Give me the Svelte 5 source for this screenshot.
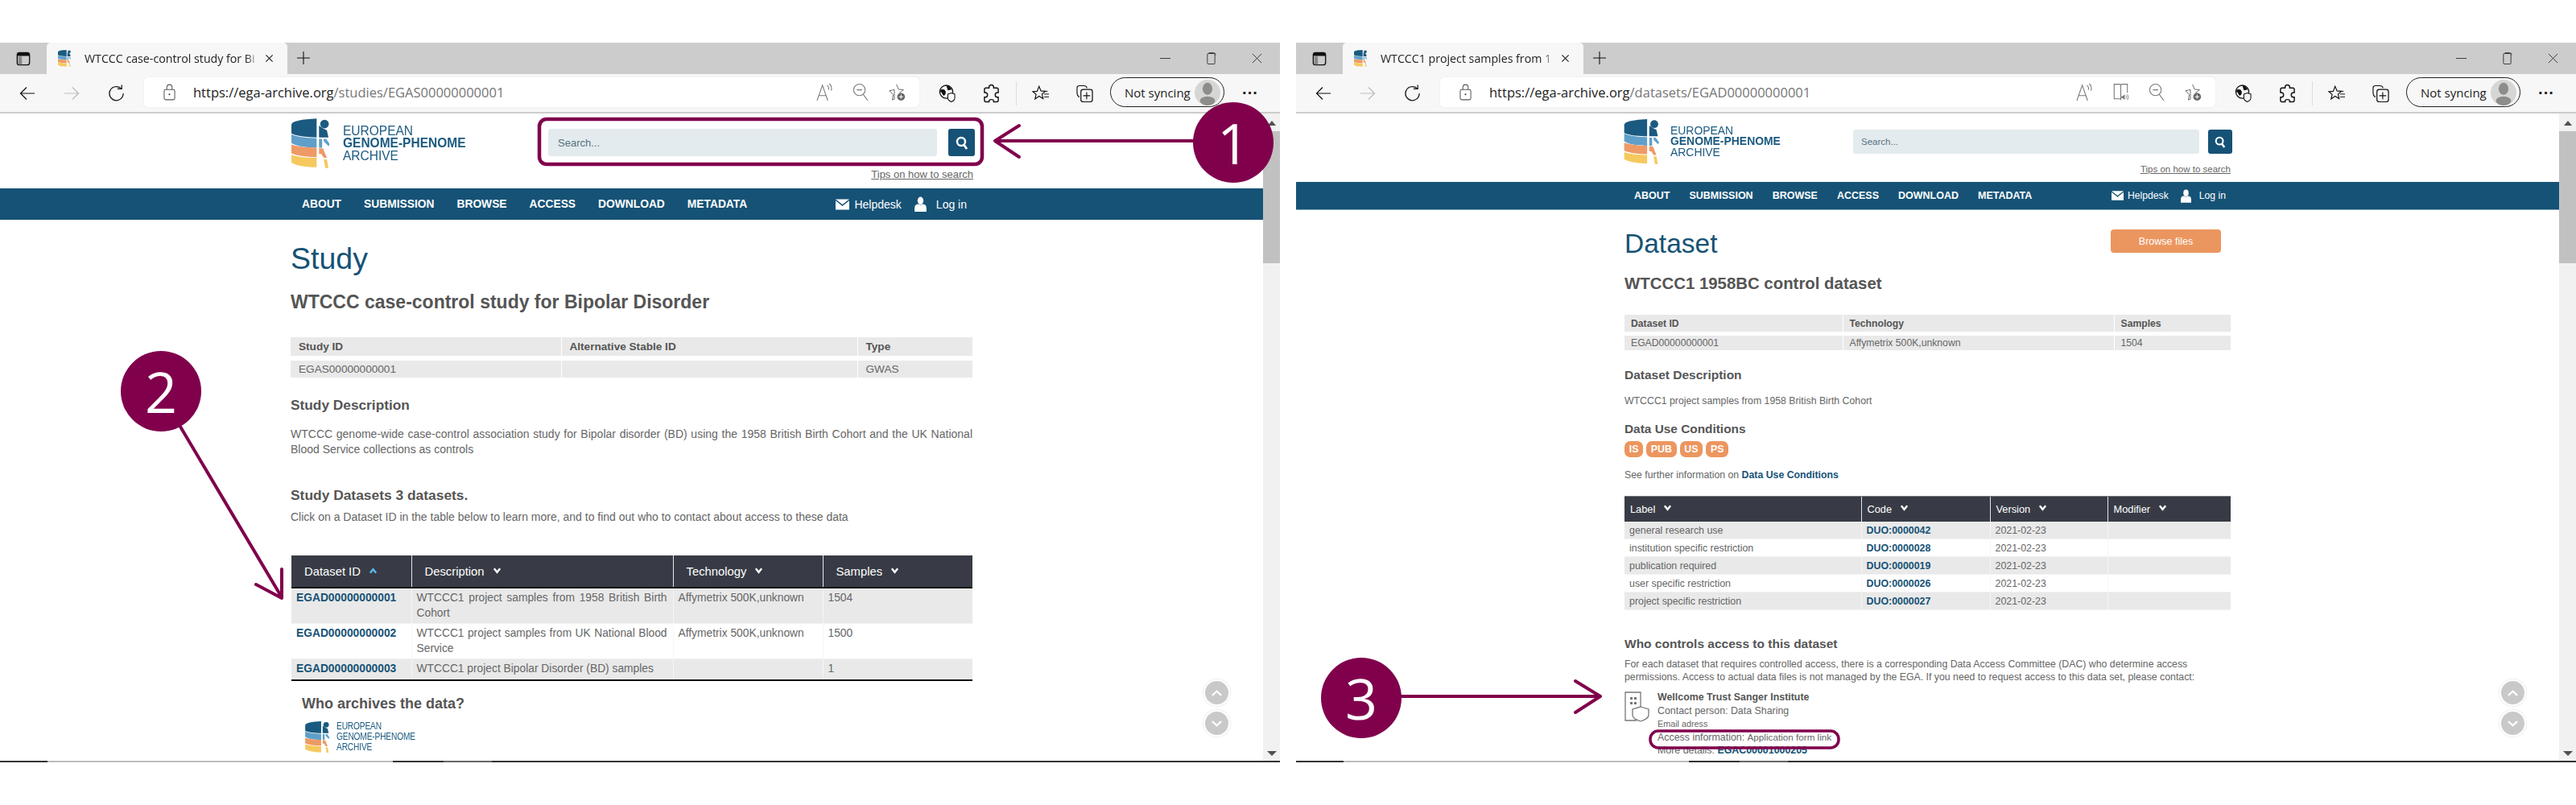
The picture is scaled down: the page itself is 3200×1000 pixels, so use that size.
<script lang="ts">
	const navItems = ['ABOUT', 'SUBMISSION', 'BROWSE', 'ACCESS', 'DOWNLOAD', 'METADATA'];

	const studyDatasets = [
		{ id: 'EGAD00000000001', desc: 'WTCCC1 project samples from 1958 British Birth Cohort', tech: 'Affymetrix 500K,unknown', samples: '1504' },
		{ id: 'EGAD00000000002', desc: 'WTCCC1 project samples from UK National Blood Service', tech: 'Affymetrix 500K,unknown', samples: '1500' },
		{ id: 'EGAD00000000003', desc: 'WTCCC1 project Bipolar Disorder (BD) samples', tech: '', samples: '1' }
	];

	const conditions = [
		{ label: 'general research use', code: 'DUO:0000042', version: '2021-02-23' },
		{ label: 'institution specific restriction', code: 'DUO:0000028', version: '2021-02-23' },
		{ label: 'publication required', code: 'DUO:0000019', version: '2021-02-23' },
		{ label: 'user specific restriction', code: 'DUO:0000026', version: '2021-02-23' },
		{ label: 'project specific restriction', code: 'DUO:0000027', version: '2021-02-23' }
	];

	const badges = ['IS', 'PUB', 'US', 'PS'];
</script>

{#snippet logoMark(cls)}
	<svg class={cls} viewBox="0 0 48 63" aria-hidden="true">
		<path fill="#1b5a80" d="M32 0C14 1 0 3 0 8v11c5 3 18 5 32 5z" />
		<path fill="#5f9fc9" d="M0 20c5 3 18 5 32 5v12C18 37 5 35 0 31z" />
		<path fill="#ee9a66" d="M0 33c5 2 18 4 32 4v12C18 49 5 47 0 44z" />
		<path fill="#f6c95f" d="M0 46c5 2 18 4 32 4v12C16 62 5 59 0 56z" />
		<circle fill="#1b5a80" cx="42" cy="7" r="5.5" />
		<path fill="#1b5a80" d="M35 9l6 4 4 2 2 9H35z" />
		<path fill="#5f9fc9" d="M35 26h4v11h-4zM41 26h3l5 7-2 2-6-6z" />
		<path fill="#ee9a66" d="M35 38h5l5 12h-4l-3-5h-3z" />
		<path fill="#f6c95f" d="M41 52h4l2 11h-4z" />
	</svg>
{/snippet}

{#snippet chevron(up, blue)}
	<svg class="chev" class:blue viewBox="0 0 12 10" aria-hidden="true">
		<path d={up ? 'M2 8l4-5 4 5' : 'M2 2l4 5 4-5'} fill="none" stroke="currentColor" stroke-width="2.6" />
	</svg>
{/snippet}

{#snippet chrome(tabTitle, host, path, reader)}
	<div class="tabstrip">
		<svg class="ic sidebar" viewBox="0 0 20 20" aria-hidden="true">
			<rect x="1.5" y="1.5" width="17" height="17" rx="3" fill="none" stroke="#111" stroke-width="1.5" />
			<path d="M2 6V4q0-2 2-2h12q2 0 2 2v2z" fill="#111" />
			<path d="M3 7h5v11H4q-1 0-1-1z" fill="#888" />
		</svg>
		<div class="tab">
			{@render logoMark('favicon')}
			<span class="tab-title">{tabTitle}</span>
			<svg class="ic tab-x" viewBox="0 0 12 12" aria-hidden="true"><path d="M1.5 1.5l9 9M10.5 1.5l-9 9" stroke="#111" stroke-width="1.1" /></svg>
		</div>
		<svg class="ic new-tab" viewBox="0 0 18 18" aria-hidden="true"><path d="M9 1v16M1 9h16" stroke="#111" stroke-width="1.1" /></svg>
		<div class="win-btns">
			<svg viewBox="0 0 14 14" aria-hidden="true"><path d="M0 7h14" stroke="#333" /></svg>
			<svg viewBox="0 0 14 18" aria-hidden="true"><rect x="2" y="2" width="10" height="14" rx="1" fill="none" stroke="#333" /><path d="M4 1h6q3 0 3 3" fill="none" stroke="#333" /></svg>
			<svg viewBox="0 0 14 14" aria-hidden="true"><path d="M1 1l12 12M13 1L1 13" stroke="#333" /></svg>
		</div>
	</div>
	<div class="toolbar">
		<svg class="ic nav-arrow" viewBox="0 0 20 18" aria-hidden="true"><path d="M19 9H1.5M9 1.5L1.5 9 9 16.5" fill="none" stroke="#111" stroke-width="1.2" /></svg>
		<svg class="ic nav-arrow fwd" viewBox="0 0 20 18" aria-hidden="true"><path d="M1 9h17.5M11 1.5L18.5 9 11 16.5" fill="none" stroke="#bbb" stroke-width="1.2" /></svg>
		<svg class="ic reload" viewBox="0 0 22 22" aria-hidden="true"><path d="M17 4.5A9 9 0 1 0 20 11" fill="none" stroke="#111" stroke-width="1.3" /><path d="M12.5 5H18V0" fill="none" stroke="#111" stroke-width="1.3" /></svg>
		<div class="urlbar">
			<svg class="ic lock" viewBox="0 0 16 22" aria-hidden="true"><rect x="1" y="7.5" width="14" height="13.5" rx="2" fill="none" stroke="#555" stroke-width="1.1" /><path d="M4.5 7.5V4.500a3.500 3.500 0 0 1 7 0v3" fill="none" stroke="#555" stroke-width="1.1" /><circle cx="8" cy="14" r="1.1" fill="#333" /></svg>
			<span class="url"><span class="host">{host}</span>{path}</span>
			<div class="url-icons">
				<svg class="ic" viewBox="0 0 22 24" aria-hidden="true"><path d="M1 23L8 3l7 20M3.500 16.500h9" fill="none" stroke="#777" stroke-width="1.1" /><path d="M14 3q3 2 2 6M17 1q4 3 2.500 9" fill="none" stroke="#777" stroke-width="1.1" /></svg>
				{#if reader}
					<svg class="ic" viewBox="0 0 24 28" aria-hidden="true"><path d="M2 2h8q2 0 2 2v22q0-2-2-2H2zM12 4q0-2 2-2h8v13M12 26" fill="none" stroke="#777" stroke-width="1.3" /><path d="M13 20h2l3-3v9l-3-3h-2z" fill="#777" /><path d="M20 19q2 2.500 0 5M22 17q3 4.500 0 9" fill="none" stroke="#777" /></svg>
				{/if}
				<svg class="ic" viewBox="0 0 22 24" aria-hidden="true"><circle cx="9" cy="9" r="7.5" fill="none" stroke="#777" stroke-width="1.1" /><path d="M5.500 9h7M14 15l6 8" fill="none" stroke="#777" stroke-width="1.1" /></svg>
				<svg class="ic" viewBox="0 0 24 26" aria-hidden="true"><path d="M11 2l3 7 7 .5-5.500 4.500 1.500 4M8 23l-3 1 1.500-7.500L1 11l7-1.500z" fill="none" stroke="#666" stroke-width="1.1" /><circle cx="17.500" cy="19.500" r="5.500" fill="#666" /><path d="M17.500 16.500v6M14.500 19.500h6" stroke="#fff" stroke-width="1.200" /></svg>
			</div>
		</div>
		<div class="tool-icons">
			<svg class="ic" viewBox="0 0 22 24" aria-hidden="true"><circle cx="10" cy="10" r="8.500" fill="none" stroke="#111" stroke-width="1.400" /><path d="M3 7q5-1 6 2t-1 5-3-1-3-3zM10 2q5 0 7 5l-5 1z" fill="#111" /><path d="M12 13l4.500-1.500L21 13v5q0 3-4.500 5Q12 21 12 18z" fill="#f7f7f7" stroke="#111" stroke-width="1.100" /></svg>
			<svg class="ic" viewBox="0 0 22 24" aria-hidden="true"><path d="M8 4q0-3 3-3t3 3v1h4q2 0 2 2v4h-1q-3 0-3 3t3 3h1v4q0 2-2 2h-4v-1q0-2-3-2t-3 2v1H4q-2 0-2-2v-4h1q3 0 3-3t-3-3H2V7q0-2 2-2h4z" fill="none" stroke="#111" stroke-width="1.500" /></svg>
			<span class="sep"></span>
			<svg class="ic" viewBox="0 0 24 24" aria-hidden="true"><path d="M10 2l2.700 6.500 6.300.5-4.800 4 1.500 6.500-5.700-3.500L4.300 20l1.500-6.500L1 9.500l6.300-.5z" fill="none" stroke="#111" stroke-width="1.300" /><path d="M17 13h7M17 17h7M17 9h5" stroke="#111" stroke-width="1.100" /></svg>
			<svg class="ic" viewBox="0 0 22 24" aria-hidden="true"><path d="M4 17Q1 15 1 12V5q0-3 3-3h6q3 0 4 3" fill="none" stroke="#111" stroke-width="1.200" /><rect x="6" y="7" width="15" height="16" rx="3" fill="none" stroke="#111" stroke-width="1.300" /><path d="M13.500 10.500v9M9 15h9" stroke="#111" stroke-width="1.200" /></svg>
		</div>
		<div class="sync-pill">
			<span>Not syncing</span>
			<svg class="avatar" viewBox="0 0 34 34" aria-hidden="true">
				<circle cx="17" cy="17" r="17" fill="#d6d6d4" />
				<ellipse cx="17" cy="12" rx="6.500" ry="8" fill="#8d8d8b" />
				<ellipse cx="17" cy="28" rx="10" ry="6" fill="#8d8d8b" />
			</svg>
		</div>
		<span class="more">···</span>
	</div>
{/snippet}

{#snippet siteHead()}
	<header class="site-head">
		<div class="wrap head-row">
			<div class="logo">
				{@render logoMark('logo-mark')}
				<div class="logo-text">
					<span>EUROPEAN</span>
					<strong>GENOME-PHENOME</strong>
					<span>ARCHIVE</span>
				</div>
			</div>
			<div class="search">
				<div class="search-row">
					<div class="search-input">Search...</div>
					<div class="search-btn">
						<svg viewBox="0 0 16 18" aria-hidden="true"><circle cx="7" cy="7.500" r="5" fill="none" stroke="#fff" stroke-width="2.400" /><path d="M10.500 11.500l3.500 5" stroke="#fff" stroke-width="2.800" /></svg>
					</div>
				</div>
				<a class="tips" href="#tips">Tips on how to search</a>
			</div>
		</div>
	</header>
	<nav class="site-nav">
		<div class="wrap nav-row">
			<div class="nav-links">
				{#each navItems as item}
					<span>{item}</span>
				{/each}
			</div>
			<div class="nav-user">
				<svg class="mail" viewBox="0 0 18 14" aria-hidden="true"><path d="M0 0h18L9 7z" fill="#fff" /><path d="M0 2l9 7 9-7v12H0z" fill="#fff" /></svg>
				<span>Helpdesk</span>
				<svg class="user" viewBox="0 0 14 18" aria-hidden="true"><ellipse cx="7" cy="5" rx="3.500" ry="4.500" fill="#fff" /><path d="M0 18v-4q0-5 4-5l3 1 3-1q4 0 4 5v4z" fill="#fff" /></svg>
				<span>Log in</span>
			</div>
		</div>
	</nav>
{/snippet}

{#snippet scrollRail()}
	<div class="rail">
		<span class="rail-up"></span>
		<span class="rail-thumb"></span>
		<span class="rail-down"></span>
	</div>
{/snippet}

{#snippet taskLine()}
	<div class="taskline">
		<span class="t1"></span><span class="t2"></span><span class="t3"></span><span class="t4"></span><span class="t5"></span>
	</div>
{/snippet}

{#snippet pager()}
	<div class="pager">
		<span class="pager-btn"><svg viewBox="0 0 16 10" aria-hidden="true"><path d="M2 8l6-5.500L14 8" fill="none" stroke="#fff" stroke-width="2.400" /></svg></span>
		<span class="pager-btn"><svg viewBox="0 0 16 10" aria-hidden="true"><path d="M2 2l6 5.500L14 2" fill="none" stroke="#fff" stroke-width="2.400" /></svg></span>
	</div>
{/snippet}

<div class="shots">
	<section class="window study">
		{@render chrome('WTCCC case-control study for Bi', 'https://ega-archive.org', '/studies/EGAS00000000001', false)}
		<div class="viewport">
			<div class="page">
				{@render siteHead()}
				<main class="wrap">
					<h1>Study</h1>
					<h2>WTCCC case-control study for Bipolar Disorder</h2>
					<table class="facts">
						<colgroup><col style="width:336px" /><col style="width:368px" /><col /></colgroup>
						<thead><tr><th>Study ID</th><th>Alternative Stable ID</th><th>Type</th></tr></thead>
						<tbody><tr><td>EGAS00000000001</td><td></td><td>GWAS</td></tr></tbody>
					</table>
					<h3 class="desc-h">Study Description</h3>
					<p class="desc">WTCCC genome-wide case-control association study for Bipolar disorder (BD) using the 1958 British Birth Cohort and the UK National Blood Service collections as controls</p>
					<h3 class="ds-h">Study Datasets 3 datasets.</h3>
					<p class="ds-p">Click on a Dataset ID in the table below to learn more, and to find out who to contact about access to these data</p>
					<table class="data">
						<colgroup><col style="width:149px" /><col style="width:325px" /><col style="width:186px" /><col /></colgroup>
						<thead>
							<tr>
								<th>Dataset ID {@render chevron(true, true)}</th>
								<th>Description {@render chevron(false, false)}</th>
								<th>Technology {@render chevron(false, false)}</th>
								<th>Samples {@render chevron(false, false)}</th>
							</tr>
						</thead>
						<tbody>
							{#each studyDatasets as row}
								<tr>
									<td><a href="#ds">{row.id}</a></td>
									<td class="just">{row.desc}</td>
									<td>{row.tech}</td>
									<td>{row.samples}</td>
								</tr>
							{/each}
						</tbody>
					</table>
					<h3 class="who">Who archives the data?</h3>
					<div class="logo small">
						{@render logoMark('logo-mark')}
						<div class="logo-text">
							<span>EUROPEAN</span>
							<span>GENOME-PHENOME</span>
							<span>ARCHIVE</span>
						</div>
					</div>
				</main>
			</div>
			{@render scrollRail()}
			{@render pager()}
		</div>
		{@render taskLine()}
	</section>

	<section class="window dataset">
		{@render chrome('WTCCC1 project samples from 1', 'https://ega-archive.org', '/datasets/EGAD00000000001', true)}
		<div class="viewport">
			<div class="page">
				{@render siteHead()}
				<main class="wrap">
					<div class="title-row">
						<h1>Dataset</h1>
						<a class="browse" href="#files">Browse files</a>
					</div>
					<h2>WTCCC1 1958BC control dataset</h2>
					<table class="facts">
						<colgroup><col style="width:271px" /><col style="width:337px" /><col /></colgroup>
						<thead><tr><th>Dataset ID</th><th>Technology</th><th>Samples</th></tr></thead>
						<tbody><tr><td>EGAD00000000001</td><td>Affymetrix 500K,unknown</td><td>1504</td></tr></tbody>
					</table>
					<h3 class="desc-h">Dataset Description</h3>
					<p class="desc">WTCCC1 project samples from 1958 British Birth Cohort</p>
					<h3 class="duc-h">Data Use Conditions</h3>
					<div class="badges">
						{#each badges as b}
							<span>{b}</span>
						{/each}
					</div>
					<p class="further">See further information on <a href="#duc">Data Use Conditions</a></p>
					<table class="data">
						<colgroup><col style="width:294px" /><col style="width:160px" /><col style="width:146px" /><col /></colgroup>
						<thead>
							<tr>
								<th>Label {@render chevron(false, false)}</th>
								<th>Code {@render chevron(false, false)}</th>
								<th>Version {@render chevron(false, false)}</th>
								<th>Modifier {@render chevron(false, false)}</th>
							</tr>
						</thead>
						<tbody>
							{#each conditions as row}
								<tr>
									<td>{row.label}</td>
									<td><a href="#duo">{row.code}</a></td>
									<td>{row.version}</td>
									<td></td>
								</tr>
							{/each}
						</tbody>
					</table>
					<h3 class="who">Who controls access to this dataset</h3>
					<p class="dac-p">For each dataset that requires controlled access, there is a corresponding Data Access Committee (DAC) who determine access permissions. Access to actual data files is not managed by the EGA. If you need to request access to this data set, please contact:</p>
					<div class="dac">
						<svg class="dac-icon" viewBox="0 0 32 38" aria-hidden="true">
							<path d="M20 26V1H1v35h14" fill="none" stroke="#777" stroke-width="1.300" />
							<path d="M7 7h3v3H7zM12 7h3v3h-3zM7 13h3v3H7zM12 13h3v3h-3z" fill="#777" />
							<path d="M20 19l10 3v7q0 5-10 8-10-3-10-8v-7z" fill="#fff" stroke="#777" stroke-width="1.300" />
						</svg>
						<div class="dac-text">
							<strong>Wellcome Trust Sanger Institute</strong>
							<span>Contact person: Data Sharing</span>
							<span class="small-line">Email adress</span>
							<span>Access information: <span class="form-link">Application form link</span></span>
							<span>More details: <a href="#dac">EGAC00001000205</a></span>
						</div>
					</div>
				</main>
			</div>
			{@render scrollRail()}
			{@render pager()}
		</div>
		{@render taskLine()}
	</section>

	<!-- hand-drawn annotations laid over the two screenshots -->
	<svg class="marks" viewBox="0 0 3200 1000" aria-hidden="true">
		<g fill="none" stroke="#80004c" stroke-width="4" stroke-linecap="round" stroke-linejoin="round">
			<rect x="670" y="148" width="550" height="56" rx="9" stroke-width="4.500" />
			<path d="M1490 175H1237M1266 156l-30 19 30 20" />
			<path d="M224 530l126 212M318 726l32 17 0-36" />
			<path d="M1740 865H1987M1957 846l31 19-31 20" />
			<rect x="2050" y="908" width="234" height="21" rx="10" stroke-width="3.500" />
		</g>
	</svg>
	<div class="marker m1">1</div>
	<div class="marker m2">2</div>
	<div class="marker m3">3</div>
</div>

<style>
	:global(body) { margin: 0; background: #fff; }
	.shots { position: relative; display: flex; gap: 20px; width: 3200px; height: 1000px; padding-top: 53px; box-sizing: border-box; font-family: 'Liberation Sans', Arial, sans-serif; color: #666; overflow: hidden; }
	.window { width: 1590px; height: 894px; display: flex; flex-direction: column; }

	/* browser chrome */
	.tabstrip { display: flex; align-items: flex-end; height: 39px; background: #ccc; flex: none; }
	.ic { display: block; flex: none; }
	.sidebar { width: 18px; height: 18px; margin: 0 20px 10px 20px; }
	.tab { display: flex; align-items: center; width: 299px; height: 39px; background: #f7f7f7; border-radius: 5px 5px 0 0; font-family: 'Open Sans', sans-serif; font-size: 14.200px; color: #222; }
	.favicon { width: 16px; height: 21px; margin-left: 14px; }
	.tab-title { width: 218px; margin-left: 17px; white-space: nowrap; overflow: hidden; -webkit-mask-image: linear-gradient(90deg, #000 92%, transparent); mask-image: linear-gradient(90deg, #000 92%, transparent); }
	.tab-x { width: 11px; height: 11px; margin-left: 6px; }
	.new-tab { width: 18px; height: 18px; margin: 0 0 11px 11px; }
	.win-btns { margin-left: auto; display: flex; gap: 44px; align-items: center; height: 39px; padding-right: 22px; }
	.win-btns svg { width: 13px; height: 13px; }
	.win-btns svg:nth-child(2) { height: 18px; }

	.toolbar { display: flex; align-items: center; height: 47px; background: #f7f7f7; border-bottom: 2px solid #ccc; flex: none; }
	.nav-arrow { width: 20px; height: 18px; margin-left: 24px; }
	.nav-arrow.fwd { margin-left: 35px; }
	.reload { width: 21px; height: 22px; margin: 0 24px 0 35px; }
	.urlbar { display: flex; align-items: center; width: 963px; height: 37px; margin-bottom: 2px; background: #fff; border-radius: 5px; box-shadow: 0 0 2px #e6e6e6; }
	.lock { width: 15px; height: 21px; margin-left: 24px; }
	.url { margin-left: 22px; font-family: 'Open Sans', sans-serif; font-size: 16.500px; color: #767676; white-space: nowrap; }
	.host { color: #222; }
	.url-icons { margin-left: auto; display: flex; align-items: center; gap: 24px; padding-right: 17px; }
	.url-icons svg { width: 21px; height: 23px; }
	.tool-icons { display: flex; align-items: center; gap: 34px; margin-left: 24px; }
	.tool-icons svg { width: 21px; height: 24px; }
	.sep { width: 1px; height: 30px; background: #ddd; margin: 0 -14.500px; }
	.sync-pill { display: flex; align-items: center; justify-content: space-between; box-sizing: border-box; width: 142px; height: 37px; margin: 0 0 2px 21px; padding: 0 4px 0 17px; border: 1.5px solid #222; border-radius: 19px; font-family: 'Open Sans', sans-serif; font-size: 15px; color: #222; }
	.avatar { width: 32px; height: 32px; }
	.more { margin-left: 22px; font-size: 20px; font-weight: 700; color: #222; }

	.viewport { position: relative; flex: 1; min-height: 0; display: flex; overflow: hidden; }
	.page { flex: 1; min-width: 0; }
	.rail { width: 21px; flex: none; display: flex; flex-direction: column; align-items: center; background: #f1f1f1; }
	.rail-up { margin-top: 9px; border: 5px solid transparent; border-top: 0; border-bottom: 6px solid #505050; }
	.rail-thumb { width: 100%; height: 164px; margin-top: 7px; background: #c1c1c1; }
	.rail-down { margin-top: auto; margin-bottom: 6px; border: 6px solid transparent; border-bottom: 0; border-top: 6px solid #505050; }
	.pager { position: absolute; left: 1495px; top: 703px; display: flex; flex-direction: column; gap: 5px; }
	.pager-btn { display: flex; align-items: center; justify-content: center; width: 29px; height: 29px; border-radius: 50%; background: #c9c9c9; border: 2px solid #fff; box-shadow: 0 0 3px #ddd; }
	.pager-btn svg { width: 15px; height: 10px; }
	.taskline { display: flex; height: 2px; flex: none; background: #333; }
	.t1 { width: 59px; }
	.t2 { width: 429px; background: #bdbdbd; }
	.t3 { width: 63px; }
	.t4 { width: 60px; background: #666; }

	/* site */
	.wrap { margin: 0 auto; width: var(--wrap); }
	.study { --wrap: 847px; }
	.dataset { --wrap: 753px; }
	.head-row { display: flex; justify-content: space-between; }
	.site-head { height: var(--head-h); }
	.study .site-head { --head-h: 93px; }
	.dataset .site-head { --head-h: 85px; }
	.logo { display: flex; align-items: center; }
	.logo-mark { display: block; flex: none; }
	.logo-text { display: flex; flex-direction: column; color: #1b5a80; white-space: nowrap; }
	.study .site-head .logo { margin: 6px 0 0 1px; align-self: flex-start; }
	.study .site-head .logo-mark { width: 47px; height: 62px; }
	.study .site-head .logo-text { margin-left: 17px; font-size: 16.500px; line-height: 15.500px; transform: scaleX(.94); transform-origin: left; }
	.dataset .site-head .logo { margin: 7px 0 0 -1px; align-self: flex-start; }
	.dataset .site-head .logo-mark { width: 44px; height: 56px; }
	.dataset .site-head .logo-text { margin-left: 14px; font-size: 14.500px; line-height: 13.500px; transform: scaleX(.96); transform-origin: left; }

	.search { display: flex; flex-direction: column; align-items: flex-end; }
	.search-row { display: flex; }
	.search-input { box-sizing: border-box; background: #e3ebee; border-radius: 3px; color: #57707f; display: flex; align-items: center; }
	.search-btn { display: flex; align-items: center; justify-content: center; background: #165276; border-radius: 3px; }
	.tips { color: #666; white-space: nowrap; }
	.study .search { margin: 19px -3px 0 0; }
	.study .search-input { width: 483px; height: 34px; padding-left: 12px; font-size: 13px; }
	.study .search-btn { width: 33px; height: 34px; margin-left: 14px; }
	.study .search-btn svg { width: 16px; height: 19px; }
	.study .tips { margin: 15px 2px 0 0; font-size: 13px; line-height: 16px; }
	.dataset .search { margin: 20px -2px 0 0; }
	.dataset .search-input { width: 430px; height: 30px; padding-left: 10px; font-size: 11.500px; }
	.dataset .search-btn { width: 30px; height: 30px; margin-left: 11px; }
	.dataset .search-btn svg { width: 14px; height: 17px; }
	.dataset .tips { margin: 12px 2px 0 0; font-size: 11.500px; line-height: 14px; }

	.site-nav { background: #165276; color: #fff; }
	.nav-row { display: flex; align-items: center; justify-content: space-between; box-sizing: border-box; }
	.nav-links { display: flex; font-weight: 700; }
	.nav-user { display: flex; align-items: center; }
	.study .site-nav { height: 39px; }
	.study .nav-row { height: 39px; padding: 0 7px 0 14px; font-size: 14px; }
	.study .nav-links { gap: 28px; font-size: 13.800px; }
	.study .mail { width: 17px; height: 14px; margin-right: 6px; }
	.study .user { width: 15px; height: 19px; margin: 0 12px 0 16px; }
	.dataset .site-nav { height: 34px; border-bottom: 1px solid #86a7bb; }
	.dataset .nav-row { height: 34px; padding: 0 6px 0 12px; font-size: 12.200px; }
	.dataset .nav-links { gap: 24px; font-size: 12.500px; }
	.dataset .mail { width: 15px; height: 12px; margin-right: 5px; }
	.dataset .user { width: 13px; height: 17px; margin: 0 10px 0 15px; }

	h1, h2, h3, p { margin: 0; }
	h1 { font-weight: 400; color: #165276; }
	h2, h3 { font-weight: 700; color: #555; }
	a { text-decoration: none; }
	td a, .further a, .dac-text a { color: #165276; font-weight: 700; }
	.tips { text-decoration: underline; }

	table { width: 100%; border-collapse: collapse; table-layout: fixed; }
	.facts th, .facts td { background: #e9e9e9; text-align: left; padding: 0 0 0 10px; }
	.facts th + th, .facts td + td { border-left: 1px solid #fff; }
	.facts th { color: #555; font-weight: 700; border-bottom-style: solid; border-bottom-color: #fff; }

	.data th { background: #383b45; color: #fff; font-weight: 400; text-align: left; white-space: nowrap; }
	.data th + th { border-left: 1px solid #e6e6e6; }
	.data td { vertical-align: top; }
	.data td + td { border-left: 1px solid #f6f6f6; }
	.data tbody tr:nth-child(odd) td { background: #e9e9e9; }
	.data tbody tr td { border-bottom: 1px solid #f2f2f2; }
	.just { text-align: justify; }
	.chev { width: 11px; height: 10px; margin-left: 6px; color: #fff; vertical-align: 1px; }
	.chev.blue { color: #5ab9ec; }

	/* study page */
	.study h1 { margin-top: 27px; font-size: 37.500px; line-height: 42px; }
	.study h2 { margin-top: 21px; font-size: 23px; line-height: 24px; }
	.study .facts { margin-top: 32px; font-size: 13.600px; }
	.study .facts th { height: 23px; border-bottom-width: 6px; }
	.study .facts td { height: 21px; }
	.study .desc-h { margin-top: 24px; font-size: 17.300px; line-height: 20px; }
	.study .desc { margin-top: 17px; font-size: 14px; line-height: 19px; text-align: justify; }
	.study .ds-h { margin-top: 37px; font-size: 17.400px; line-height: 20px; }
	.study .ds-p { margin-top: 8px; font-size: 14px; line-height: 19px; }
	.study .data { margin-top: 38px; width: 846px; margin-left: 1px; font-size: 13.800px; border-bottom: 2px solid #111; }
	.study .data th { height: 39px; padding: 0 0 0 16px; font-size: 14.800px; border-bottom: 2px solid #111; }
	.study .data td { padding: 3px 7px 3px 6px; line-height: 18.500px; }
	.study .who { margin: 18px 0 0 14px; font-size: 18px; line-height: 20px; }
	.logo.small { margin: 12px 0 0 15px; }
	.logo.small .logo-mark { width: 36px; height: 39px; }
	.logo.small .logo-text { margin-left: 6px; font-size: 12px; line-height: 13px; letter-spacing: -.2px; transform: scaleX(.85); transform-origin: left; }

	/* dataset page */
	.title-row { display: flex; justify-content: space-between; align-items: flex-start; margin-top: 23px; padding-right: 12px; }
	.dataset h1 { font-size: 33.500px; line-height: 38px; }
	.browse { display: flex; align-items: center; justify-content: center; width: 137px; height: 29px; margin-top: 1px; background: #ec965f; border-radius: 4px; color: #fff; font-size: 12.500px; }
	.dataset h2 { margin-top: 19px; font-size: 20.400px; line-height: 22px; }
	.dataset .facts { margin-top: 28px; font-size: 12.200px; }
	.dataset .facts th { height: 21px; border-bottom-width: 5px; padding-left: 8px; }
	.dataset .facts td { height: 18px; padding-left: 8px; }
	.dataset .desc-h { margin-top: 22px; font-size: 15.500px; line-height: 18px; }
	.dataset .desc { margin-top: 15px; font-size: 12.300px; line-height: 17px; }
	.dataset .duc-h { margin-top: 17px; font-size: 15.400px; line-height: 18px; }
	.badges { display: flex; gap: 4px; margin-top: 6px; }
	.badges span { padding: 0 5.700px; height: 20px; line-height: 20px; background: #ec965f; border-radius: 7px; color: #fff; font-size: 12.400px; font-weight: 700; }
	.further { margin-top: 14px; font-size: 12.300px; line-height: 17px; }
	.dataset .data { margin-top: 17px; font-size: 12.400px; }
	.dataset .data th { height: 31px; padding: 0 0 0 7px; font-size: 12.800px; border-top: 1px solid #777; }
	.dataset .data td { padding: 0 6px; height: 21px; vertical-align: middle; }
	.dataset .who { margin-top: 33px; font-size: 15.500px; line-height: 18px; }
	.dac-p { margin-top: 9px; font-size: 12.300px; line-height: 15.500px; }
	.dac { display: flex; margin-top: 9px; }
	.dac-icon { width: 32px; height: 38px; flex: none; margin-top: 1px; }
	.dac-text { display: flex; flex-direction: column; margin-left: 9px; font-size: 12.400px; line-height: 16.500px; }
	.dac-text strong { color: #555; }
	.small-line { font-size: 10.800px; }
	.form-link { font-size: 11.700px; }

	/* annotations */
	.marks { position: absolute; left: 0; top: 0; width: 3200px; height: 1000px; pointer-events: none; }
	.marker { position: absolute; display: flex; align-items: center; justify-content: center; width: 100px; height: 100px; border-radius: 50%; background: #80004c; color: #fff; font-family: 'Open Sans', sans-serif; font-size: 70px; }
	.m1 { left: 1482px; top: 127px; }
	.m2 { left: 150px; top: 436px; }
	.m3 { left: 1641px; top: 817px; }
</style>
